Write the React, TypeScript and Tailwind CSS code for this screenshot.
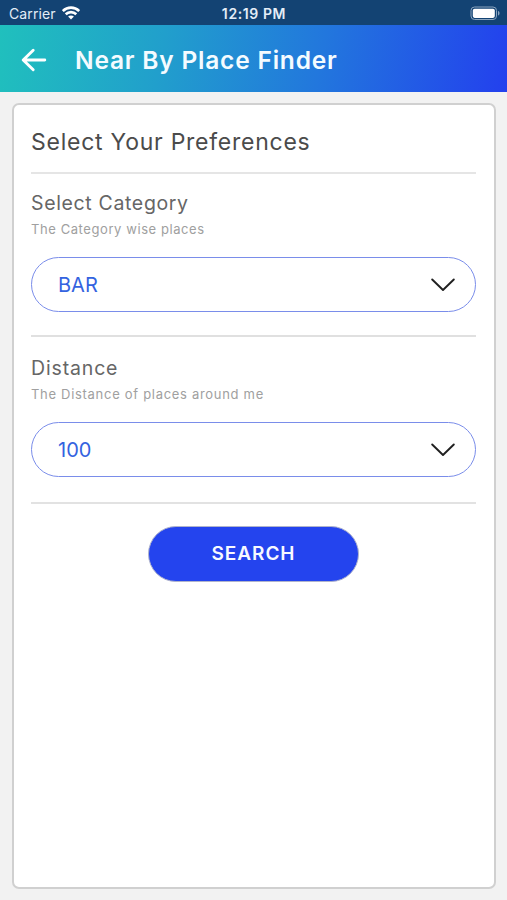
import React from "react";

function StatusBar() {
  return (
    <div className="grid h-[25px] grid-cols-3 items-center bg-[#134373] pt-[2px] text-[#e3edf7]">
      <div className="flex items-center gap-[6px] pl-[9px]">
        <span className="text-[14px] leading-none tracking-[0.1px]">Carrier</span>
        <svg className="-mt-[2px]" width="18" height="14" viewBox="0 0 18 14" fill="none" stroke="#fff" strokeWidth="2.6">
          <path d="M0.8 5.1C5.4 0.5 12.6 0.5 17.2 5.1" />
          <path d="M3.7 8.3C6.7 5.4 11.3 5.4 14.3 8.3" />
          <path d="M6.1 10.5C7.7 9.1 10.3 9.1 11.9 10.5L9 13.5Z" fill="#fff" stroke="none" />
        </svg>
      </div>
      <span className="whitespace-nowrap pl-px text-center text-[14px] font-semibold leading-none tracking-[0.6px]">12:19 PM</span>
      <div className="flex justify-end pr-[6px]">
        <svg width="31" height="15" viewBox="0 0 31 15" fill="none">
          <rect x="1" y="1" width="25.5" height="12.5" rx="3.5" stroke="#8ba5bf" />
          <rect x="2.8" y="2.7" width="22" height="9.2" rx="1.8" fill="#fff" />
          <path d="M28 5C30 5.6 30 8.9 28 9.5Z" fill="#8ba5bf" />
        </svg>
      </div>
    </div>
  );
}

function Header() {
  return (
    <header className="flex h-[67px] items-center bg-linear-[100deg,#20c0bd_0%,#219fcc_32%,#2277dd_63%,#2340ee_100%] pl-[21px]">
      <svg className="mt-[2px]" width="26" height="24" viewBox="0 0 26 24" fill="none" stroke="#fff" strokeWidth="2.9" strokeLinecap="round" strokeLinejoin="round">
        <path d="M12.2 2.2L2.2 12L12.2 21.8M2.5 12H23.8" />
      </svg>
      <h1 className="ml-[28px] mt-[3px] whitespace-nowrap text-[24.5px] font-semibold leading-none tracking-[0.8px] text-[#f4fbff]">
        Near By Place Finder
      </h1>
    </header>
  );
}

function SelectField({ value }: { value: string }) {
  return (
    <button className="flex h-[55px] w-full items-center justify-between rounded-full border-[1.5px] border-[#7a8dea] bg-white pl-[26px] pr-[20px] text-[20px] text-[#3463e0]">
      <span className="pt-px">{value}</span>
      <svg className="mt-px" width="24" height="14" viewBox="0 0 24 14" fill="none" stroke="#202020" strokeWidth="1.9" strokeLinecap="round" strokeLinejoin="round">
        <path d="M1.2 1.5L12 12L22.8 1.5" />
      </svg>
    </button>
  );
}

export default function App() {
  return (
    <div className="flex h-[900px] w-[507px] flex-col overflow-hidden bg-[#f2f2f2] font-['Inter','Liberation_Sans',sans-serif]">
      <StatusBar />
      <Header />
      <main className="ml-[12px] mr-[11px] mb-[11px] mt-[11px] flex flex-1 flex-col rounded-[7px] border-2 border-[#d0d0d0] bg-white pl-[17px] pr-[18px]">
        <h2 className="mt-[21px] h-[46px] whitespace-nowrap text-[23px] leading-[32px] tracking-[0.75px] text-[#4b4b4b]">
          Select Your Preferences
        </h2>
        <section className="h-[163px] border-t-2 border-[#e5e5e5] pt-[15px]">
          <h3 className="text-[19.5px] leading-[28px] tracking-[0.65px] text-[#666]">Select Category</h3>
          <p className="mb-[17px] mt-[2px] text-[13px] leading-[21px] tracking-[0.58px] text-[#a0a0a0]">The Category wise places</p>
          <SelectField value="BAR" />
        </section>
        <section className="h-[167px] border-t-2 border-[#e0e0e0] pt-[17px]">
          <h3 className="text-[19.5px] leading-[28px] tracking-[0.85px] text-[#666]">Distance</h3>
          <p className="mb-[17px] mt-[2px] text-[13px] leading-[21px] tracking-[0.7px] text-[#a0a0a0]">The Distance of places around me</p>
          <SelectField value="100" />
        </section>
        <div className="flex justify-center border-t-2 border-[#e2e2e2] pt-[22px]">
          <button className="h-[56px] w-[211px] rounded-full border border-[#b0b4cc] bg-[#2444ee] pt-px text-[19px] font-semibold tracking-[0.95px] text-[#f7f9ff]">
            SEARCH
          </button>
        </div>
      </main>
    </div>
  );
}
